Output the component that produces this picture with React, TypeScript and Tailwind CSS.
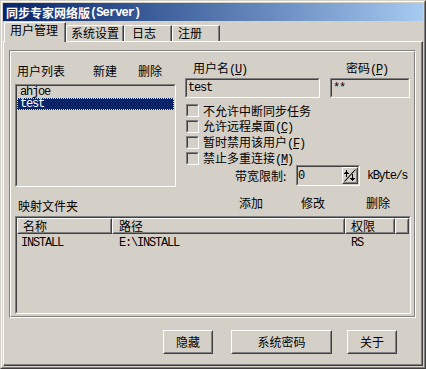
import React from "react";

type P = { className?: string; innerClassName?: string; children?: React.ReactNode };

function M({ children, className = "" }: { children: React.ReactNode; className?: string }) {
  return <span className={"font-['Liberation_Mono',monospace] tracking-[-1.2px] " + className}>{children}</span>;
}

function Sunken({ className = "", innerClassName = "", children }: P) {
  return (
    <div className={"border border-t-[#808080] border-l-[#808080] border-r-white border-b-white " + className}>
      <div className={"h-full w-full border border-t-[#404040] border-l-[#404040] border-r-[#d4d0c8] border-b-[#d4d0c8] " + innerClassName}>
        {children}
      </div>
    </div>
  );
}

function Raised({ className = "", innerClassName = "", children }: P) {
  return (
    <div className={"border border-t-white border-l-white border-r-[#404040] border-b-[#404040] " + className}>
      <div className={"h-full w-full border border-t-[#d4d0c8] border-l-[#d4d0c8] border-r-[#808080] border-b-[#808080] " + innerClassName}>
        {children}
      </div>
    </div>
  );
}

function Check({ children }: { children: React.ReactNode }) {
  return (
    <div className="flex h-[13px] items-center ml-[1px]">
      <Sunken className="w-[13px] h-[13px]" innerClassName="bg-[#d4d0c8]" />
      <span className="ml-[4px] whitespace-nowrap">{children}</span>
    </div>
  );
}

function Tab({ label, selected, w, pl }: { label: string; selected?: boolean; w: string; pl: string }) {
  return (
    <div
      className={
        (selected ? "relative z-10 -mb-[1px] h-[20px] " : "h-[16px] ") +
        w +
        " border-t border-l border-r border-t-white border-l-white border-r-[#404040] rounded-tl-[2px] bg-[#d4d0c8]"
      }
    >
      <div className={"h-full border-r border-r-[#808080] pt-[1px] whitespace-nowrap " + pl}>{label}</div>
    </div>
  );
}

function Spinner() {
  return (
    <Raised className="w-[16px] h-[17px] ml-auto" innerClassName="flex items-center justify-center">
      <svg width="12" height="13" viewBox="0 0 12 13">
        <line x1="0.5" y1="12.5" x2="11.5" y2="0.5" stroke="#000" strokeWidth="1.1" />
        <g shapeRendering="crispEdges" fill="#000">
          <rect x="2" y="2" width="1" height="6" />
          <rect x="1" y="3" width="3" height="1" />
          <rect x="0" y="4" width="5" height="1" />
          <rect x="2" y="1" width="1" height="1" />
          <rect x="8" y="5" width="1" height="6" />
          <rect x="7" y="10" width="3" height="1" />
          <rect x="6" y="9" width="5" height="1" />
          <rect x="8" y="11" width="1" height="1" />
        </g>
      </svg>
    </Raised>
  );
}

export default function App() {
  return (
    <div className="w-[426px] h-[369px] border border-t-[#d4d0c8] border-l-[#d4d0c8] border-r-[#404040] border-b-[#404040] bg-[#d4d0c8] font-['Noto_Sans_CJK_SC',sans-serif] text-[12px] leading-[12px] text-black">
      <div className="h-full border border-t-white border-l-white border-r-[#808080] border-b-[#808080] p-[1px] flex flex-col">
        {/* Title bar */}
        <div className="h-[18px] shrink-0 flex items-center pl-[3px] pt-[1px] bg-linear-to-r from-[#0a246a] to-[#a6caf0] text-white font-bold whitespace-nowrap">
          同步专家网络版<span className="font-['Liberation_Mono',monospace] tracking-[-0.9px]">(Server)</span>
        </div>

        {/* Tabs */}
        <div className="h-[20px] shrink-0 flex items-end pl-[1px]">
          <Tab label="用户管理" selected w="w-[62px]" pl="pl-[5px]" />
          <Tab label="系统设置" w="w-[58px]" pl="pl-[4px]" />
          <Tab label="日志" w="w-[48px]" pl="pl-[7px]" />
          <Tab label="注册" w="w-[48px]" pl="pl-[5px]" />
        </div>

        {/* Panel */}
        <div className="flex-1 border border-t-white border-l-white border-r-[#404040] border-b-[#404040]">
          <div className="h-full flex flex-col border-r border-b border-r-[#808080] border-b-[#808080]">
            {/* Group box */}
            <div className="ml-[5px] mt-[8px] w-[407px] h-[268px] border border-t-[#808080] border-l-[#808080] border-r-white border-b-white">
              <div className="h-full flex flex-col border border-t-white border-l-white border-r-[#808080] border-b-[#808080]">
                {/* Top section */}
                <div className="flex h-[135px] shrink-0">
                  {/* Left column */}
                  <div className="ml-[4px] mt-[13px] w-[161px] flex flex-col">
                    <div className="flex h-[12px] pl-[2px] whitespace-nowrap">
                      <span>用户列表</span>
                      <span className="ml-[28px]">新建</span>
                      <span className="ml-[21px]">删除</span>
                    </div>
                    <Sunken className="mt-[7px] h-[103px]" innerClassName="flex flex-col">
                      <div className="h-[12px] pl-[3px] flex items-center">
                        <M>ahjoe</M>
                      </div>
                      <div className="h-[12px] pl-[2px] flex items-center bg-[#0a246a] text-white border border-dotted border-[#e8dca0]">
                        <M>test</M>
                      </div>
                    </Sunken>
                  </div>

                  {/* Right column */}
                  <div className="ml-[9px] mt-[10px] w-[224px] flex flex-col">
                    <div className="grid grid-cols-[135px_80px] gap-x-[10px] gap-y-[4px]">
                      <div className="h-[12px] pl-[8px] whitespace-nowrap">
                        用户名<M>(<u>U</u>)</M>
                      </div>
                      <div className="h-[12px] pl-[16px] whitespace-nowrap">
                        密码<M>(<u>P</u>)</M>
                      </div>
                      <Sunken className="h-[20px]" innerClassName="flex items-center pl-[1px]">
                        <M>test</M>
                      </Sunken>
                      <Sunken className="h-[20px]" innerClassName="flex items-center pl-[1px]">
                        <M>**</M>
                      </Sunken>
                    </div>
                    <div className="mt-[6px] flex flex-col gap-[3px]">
                      <Check>不允许中断同步任务</Check>
                      <Check>
                        允许远程桌面<M>(<u>C</u>)</M>
                      </Check>
                      <Check>
                        暂时禁用该用户<M>(<u>F</u>)</M>
                      </Check>
                      <Check>
                        禁止多重连接<M>(<u>M</u>)</M>
                      </Check>
                    </div>
                    <div className="flex items-center h-[21px]">
                      <span className="ml-[50px] w-[61px] whitespace-nowrap">带宽限制:</span>
                      <Sunken className="w-[64px] h-[21px]" innerClassName="flex items-center">
                        <M>0</M>
                        <Spinner />
                      </Sunken>
                      <span className="ml-[7px] font-['Liberation_Mono',monospace] tracking-[-1.5px]">kByte/s</span>
                    </div>
                  </div>
                </div>

                {/* Bottom section */}
                <div className="mt-[10px] h-[15px] flex items-start whitespace-nowrap">
                  <span className="ml-[7px] mt-[3px]">映射文件夹</span>
                  <span className="ml-[161px]">添加</span>
                  <span className="ml-[38px]">修改</span>
                  <span className="ml-[41px]">删除</span>
                </div>
                <Sunken className="ml-[4px] mt-[4px] w-[396px] h-[98px]" innerClassName="flex flex-col">
                  <div className="flex h-[16px]">
                    <Raised className="w-[95px]" innerClassName="flex items-center pl-[4px]">
                      名称
                    </Raised>
                    <Raised className="w-[233px]" innerClassName="flex items-center pl-[5px]">
                      路径
                    </Raised>
                    <Raised className="w-[50px]" innerClassName="flex items-center pl-[4px]">
                      权限
                    </Raised>
                    <Raised className="flex-1" />
                  </div>
                  <div className="flex h-[16px] items-center">
                    <div className="w-[95px] pl-[4px]">
                      <M>INSTALL</M>
                    </div>
                    <div className="w-[233px] pl-[7px]">
                      <M>E:\INSTALL</M>
                    </div>
                    <div className="w-[50px] pl-[6px]">
                      <M>RS</M>
                    </div>
                  </div>
                </Sunken>
              </div>
            </div>

            {/* Buttons */}
            <div className="mt-[12px] ml-[159px] flex">
              <Raised className="w-[50px] h-[24px]" innerClassName="flex items-center justify-center">
                隐藏
              </Raised>
              <Raised className="ml-[18px] w-[101px] h-[24px]" innerClassName="flex items-center justify-center">
                系统密码
              </Raised>
              <Raised className="ml-[15px] w-[50px] h-[24px]" innerClassName="flex items-center justify-center">
                关于
              </Raised>
            </div>
          </div>
        </div>
      </div>
    </div>
  );
}
